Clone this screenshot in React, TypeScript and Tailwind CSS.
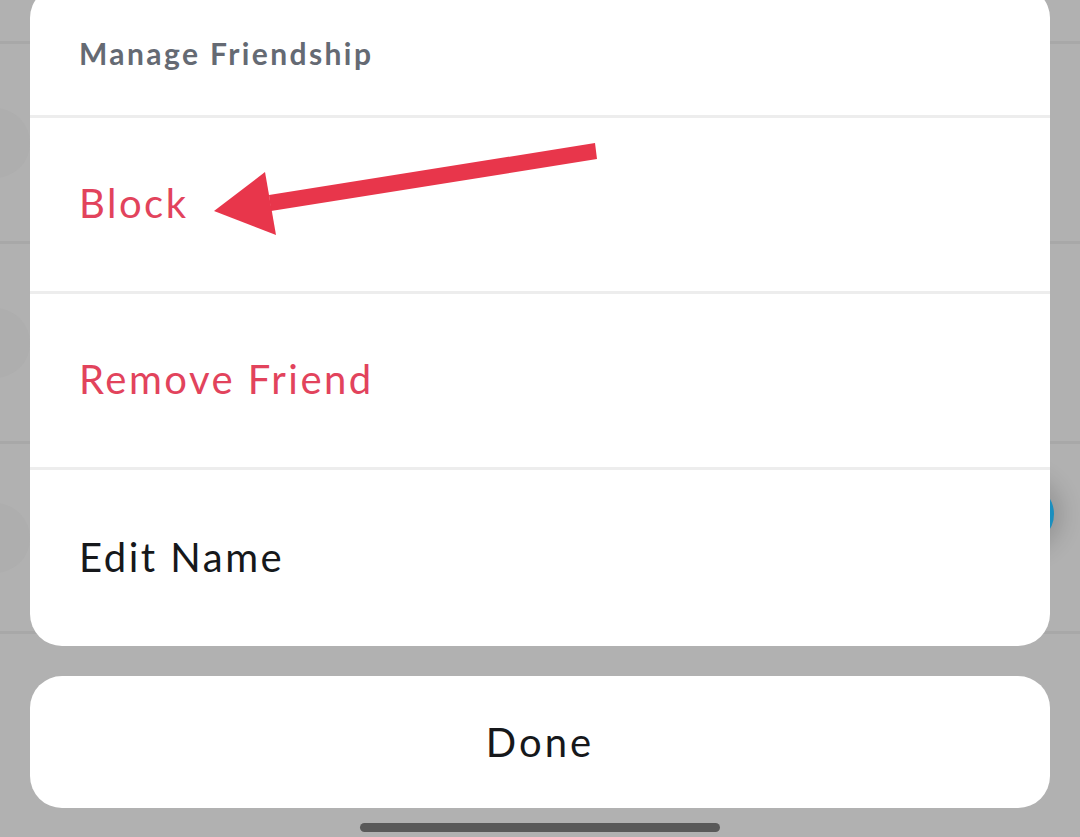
import React from "react";

const rows = [
  { label: "Block", color: "text-[#e2435c]" },
  { label: "Remove Friend", color: "text-[#e2435c]" },
  { label: "Edit Name", color: "text-[#16181b]" },
];

function Arrow() {
  return (
    <svg className="pointer-events-none absolute left-0 top-0" width="1080" height="837" viewBox="0 0 1080 837">
      <polygon points="597,159 595,143 269,195 271,211" fill="#e8364b" />
      <polygon points="214,211 265,172 276,235" fill="#e8364b" />
    </svg>
  );
}

export default function App() {
  return (
    <div className="relative h-[837px] w-[1080px] overflow-hidden bg-[#b1b1b1] font-['Lato',sans-serif]">
      {/* dimmed list behind the sheet */}
      <div className="absolute inset-0 flex flex-col">
        <div className="h-[44px] shrink-0 border-b-[3px] border-[#a8a8a8]" />
        <div className="flex h-[200px] shrink-0 items-center border-b-[3px] border-[#a8a8a8]">
          <div className="-ml-[40px] h-[70px] w-[70px] rounded-full bg-[#aeaeae]" />
        </div>
        <div className="flex h-[200px] shrink-0 items-center border-b-[3px] border-[#a8a8a8]">
          <div className="-ml-[40px] h-[70px] w-[70px] rounded-full bg-[#aeaeae]" />
        </div>
        <div className="flex h-[190px] shrink-0 items-center border-b-[3px] border-[#a8a8a8]">
          <div className="-ml-[40px] h-[70px] w-[70px] rounded-full bg-[#aeaeae]" />
          <div className="mb-[48px] ml-auto mr-[26px] h-[62px] w-[62px] rounded-full bg-[#1b8fbf] shadow-[0_0_22px_8px_rgba(0,0,0,0.16)]" />
        </div>
      </div>

      <div className="relative flex flex-col px-[30px]">
        <div className="-mt-[14px] flex flex-col overflow-hidden rounded-[32px] bg-white">
          <div className="flex h-[132px] items-center border-b-[3px] border-[#ededed] px-[49px] pt-[6px]">
            <span className="text-[30px] font-bold tracking-[2.4px] text-[#656a73]">Manage Friendship</span>
          </div>
          {rows.map((row, i) => (
            <div
              key={row.label}
              className={`flex h-[176px] items-center px-[49px] pb-[3px] ${i < rows.length - 1 ? "border-b-[3px] border-[#ededed]" : ""}`}
            >
              <span className={`text-[40px] tracking-[2.5px] ${row.color}`}>{row.label}</span>
            </div>
          ))}
        </div>

        <button className="mt-[30px] flex h-[132px] items-center justify-center rounded-[32px] bg-white text-[40px] tracking-[3px] text-[#16181b]">
          Done
        </button>

        <div className="mx-auto mt-[15px] h-[9px] w-[360px] rounded-full bg-[#595959]" />
      </div>

      <Arrow />
    </div>
  );
}
